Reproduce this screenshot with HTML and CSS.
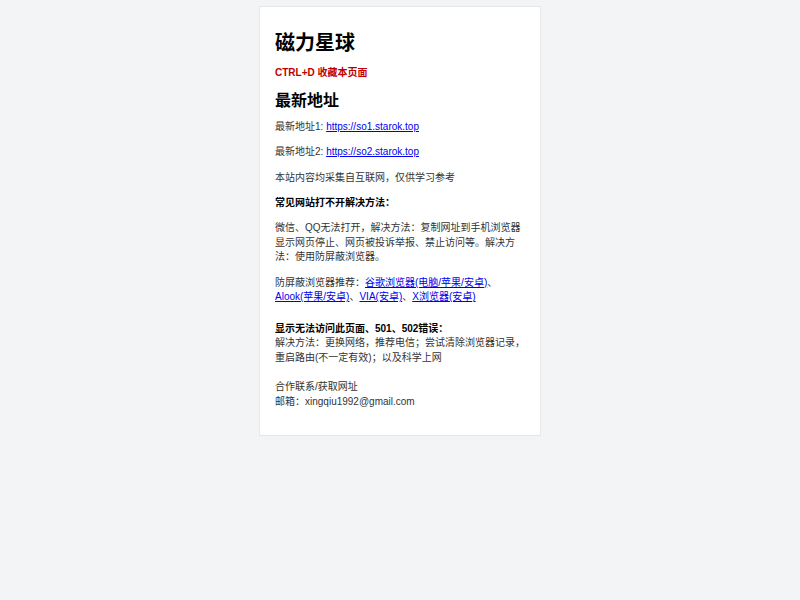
FILE: index.html
```html
<!DOCTYPE html>
<html lang="zh-CN">
<head>
<meta charset="utf-8">
<title>磁力星球</title>
<link rel="stylesheet" href="styles.css">
</head>
<body>
<div class="card">
  <h1 class="title">磁力星球</h1>
  <p class="bookmark">CTRL+D 收藏本页面</p>
  <h2 class="subtitle">最新地址</h2>
  <p class="para">最新地址1: <a href="#">https://so1.starok.top</a></p>
  <p class="para">最新地址2: <a href="#">https://so2.starok.top</a></p>
  <p class="para">本站内容均采集自互联网，仅供学习参考</p>
  <p class="para strong">常见网站打不开解决方法：</p>
  <p class="para">微信、QQ无法打开，解决方法：复制网址到手机浏览器显示网页停止、网页被投诉举报、禁止访问等。解决方法：使用防屏蔽浏览器。</p>
  <p class="para">防屏蔽浏览器推荐：<a href="#">谷歌浏览器(电脑/苹果/安卓)</a>、<a href="#">Alook(苹果/安卓)</a>、<a href="#">VIA(安卓)</a>、<a href="#">X浏览器(安卓)</a></p>
  <p class="para extra"><b>显示无法访问此页面、501、502错误：</b><br>解决方法：更换网络，推荐电信；尝试清除浏览器记录，重启路由(不一定有效)；以及科学上网<br><br>合作联系/获取网址<br>邮箱：xingqiu1992@gmail.com</p>
</div>
</body>
</html>
```

FILE: styles.css
```css
html, body {
  margin: 0;
  padding: 0;
}
body {
  background: #f3f4f6;
  font-family: "Liberation Sans", "Noto Sans CJK JP", sans-serif;
  font-size: 10px;
  line-height: 14.7px;
  color: #333;
  padding-top: 6px;
}
.card {
  width: 250px;
  margin: 0 auto;
  background: #fff;
  border: 1px solid #e5e7eb;
  padding: 15px;
}
.title {
  font-size: 20px;
  font-weight: bold;
  color: #000;
  margin: 7px 0 0;
  line-height: 29px;
}
.bookmark {
  color: #c00000;
  font-weight: bold;
  margin: 7.5px 0 0;
}
.subtitle {
  font-size: 16px;
  font-weight: bold;
  color: #000;
  margin: 9px 0 0;
  line-height: 23px;
}
.para {
  margin: 0 0 10.5px;
}
.subtitle + .para {
  margin-top: 8px;
}
.strong {
  font-weight: bold;
  color: #000;
}
.para b {
  color: #000;
}
.extra {
  margin-top: 16.5px;
}
a {
  color: #0000ee;
  text-decoration: underline;
}
```
